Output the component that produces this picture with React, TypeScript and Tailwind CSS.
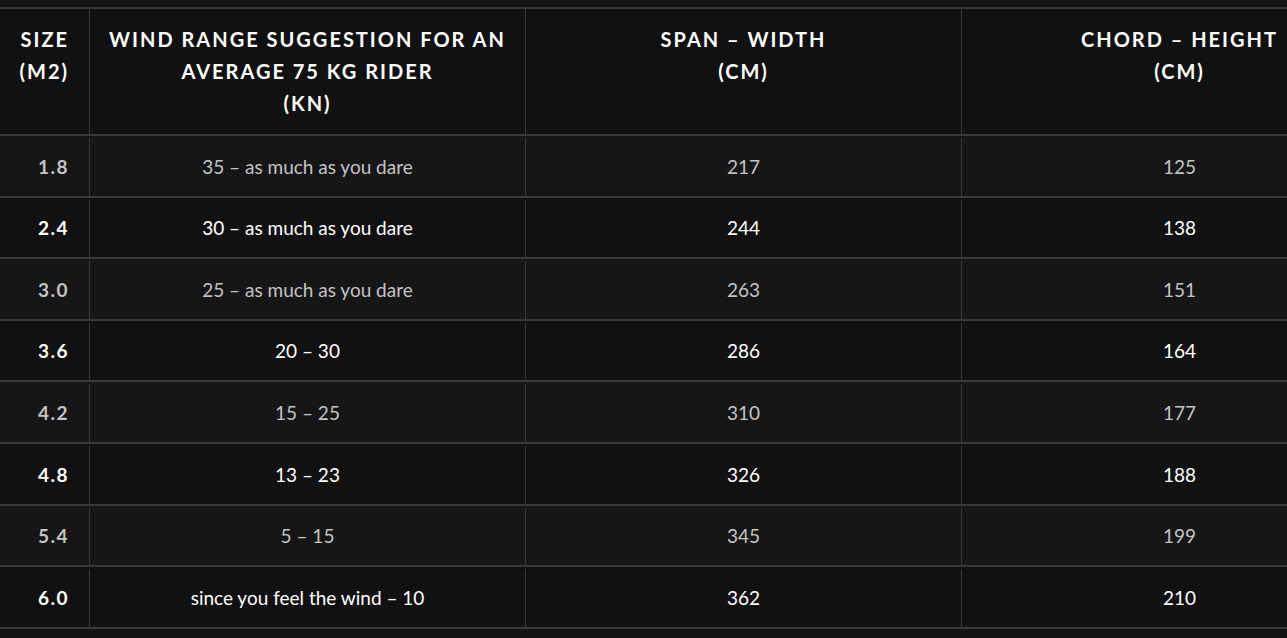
import React from "react";

type Row = {
    size: string;
    wind: string;
    span: string;
    chord: string;
};

const rows: Row[] = [
    { size: "1.8", wind: "35 – as much as you dare", span: "217", chord: "125" },
    { size: "2.4", wind: "30 – as much as you dare", span: "244", chord: "138" },
    { size: "3.0", wind: "25 – as much as you dare", span: "263", chord: "151" },
    { size: "3.6", wind: "20 – 30", span: "286", chord: "164" },
    { size: "4.2", wind: "15 – 25", span: "310", chord: "177" },
    { size: "4.8", wind: "13 – 23", span: "326", chord: "188" },
    { size: "5.4", wind: "5 – 15", span: "345", chord: "199" },
    { size: "6.0", wind: "since you feel the wind – 10", span: "362", chord: "210" },
];

export default function App() {
    return (
        <div
            className="w-screen h-screen overflow-hidden bg-[#131313] pt-[7px]"
            style={{ fontFamily: "Lato, 'Open Sans', sans-serif" }}
        >
            <div className="w-[1397px] border-t-2 border-[#363636]">
                {/* header */}
                <div className="flex h-[127px] border-b-2 border-[#393939] bg-[#111111] text-white font-bold uppercase text-[20px] leading-[32px] tracking-[0.1em]">
                    <div className="w-[89px] shrink-0 pt-[14px] pr-[20px] text-right">
                        SIZE
                        <br />
                        (M2)
                    </div>
                    <div className="w-[436px] shrink-0 border-l border-[#3a3a3a] pt-[14px] text-center">
                        Wind range suggestion for an
                        <br />
                        average 75 kg rider
                        <br />
                        (kn)
                    </div>
                    <div className="w-[436px] shrink-0 border-l border-[#3a3a3a] pt-[14px] text-center">
                        Span – width
                        <br />
                        (cm)
                    </div>
                    <div className="w-[436px] shrink-0 border-l border-[#3a3a3a] pt-[14px] text-center">
                        Chord – height
                        <br />
                        (cm)
                    </div>
                </div>

                {rows.map((r, i) => {
                    const odd = i % 2 === 0;
                    return (
                        <div
                            key={r.size}
                            className={`flex h-[61.6px] border-b-2 border-[#393939] text-[19px] pt-[2px] ${
                                odd ? "bg-[#161616] text-[#c4c4c4]" : "bg-[#111111] text-white"
                            }`}
                        >
                            <div className="w-[89px] shrink-0 flex items-center justify-end pr-[20px] font-bold tracking-[0.08em]">
                                {r.size}
                            </div>
                            <div className="w-[436px] shrink-0 flex items-center justify-center border-l border-[#3a3a3a]">
                                {r.wind}
                            </div>
                            <div className="w-[436px] shrink-0 flex items-center justify-center border-l border-[#3a3a3a]">
                                {r.span}
                            </div>
                            <div className="w-[436px] shrink-0 flex items-center justify-center border-l border-[#3a3a3a]">
                                {r.chord}
                            </div>
                        </div>
                    );
                })}
            </div>
        </div>
    );
}
